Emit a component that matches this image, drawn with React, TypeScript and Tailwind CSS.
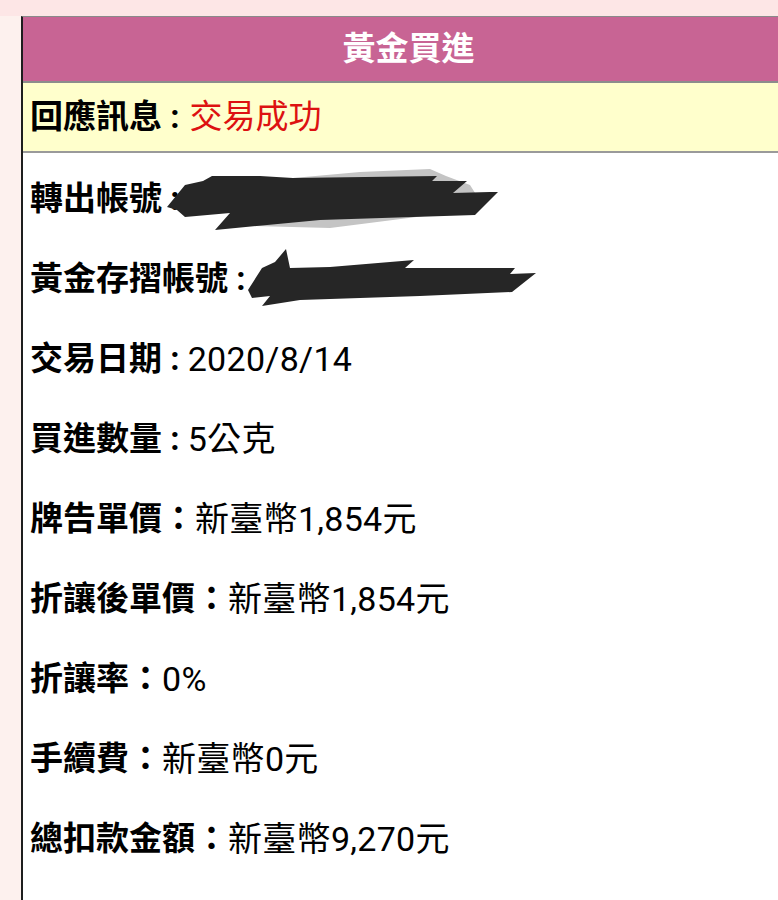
import React from 'react';

type Row = { label: string; sep: string; value?: string; redacted?: boolean };

const rows: Row[] = [
  { label: '轉出帳號', sep: ' :', redacted: true },
  { label: '黃金存摺帳號', sep: ' :', redacted: true },
  { label: '交易日期', sep: ' : ', value: '2020/8/14' },
  { label: '買進數量', sep: ' : ', value: '5公克' },
  { label: '牌告單價', sep: '：', value: '新臺幣1,854元' },
  { label: '折讓後單價', sep: '：', value: '新臺幣1,854元' },
  { label: '折讓率', sep: '：', value: '0%' },
  { label: '手續費', sep: '：', value: '新臺幣0元' },
  { label: '總扣款金額', sep: '：', value: '新臺幣9,270元' },
];

const Redactions: React.FC = () => (
  <svg
    className="absolute left-0 top-0 pointer-events-none"
    width="778"
    height="330"
    viewBox="0 0 778 330"
  >
    {/* grey smudge under the first scribble */}
    <path
      d="M293 178 L360 172 L430 169 L446 176 L470 185 L477 196 L470 201 L440 214 L330 228 L252 226 Z"
      fill="#c4c4c4"
    />
    <path
      d="M167 207 L185 185 L203 181 L212 176 L260 176 L293 178 L437 176 L432 181 L467 181 L453 193 L490 192 L498 192 L475 215 L320 220 L215 230 L230 213 L185 217 L177 210 Z"
      fill="#262626"
    />
    <path
      d="M248 290 L262 268 L275 262 L286 249 L290 268 L330 267 L414 260 L405 268 L515 268 L510 274 L536 273 L512 292 L420 296 L300 300 L262 306 L270 296 L252 298 Z"
      fill="#262626"
    />
  </svg>
);

const App: React.FC = () => {
  return (
    <div
      className="relative min-h-[900px] w-[778px] overflow-hidden bg-[#fdf1ee]"
      style={{ fontFamily: 'Roboto, "Noto Sans CJK TC", sans-serif' }}
    >
      <div className="h-[16px] bg-[#fde6e6]" />

      <div className="ml-[21px] w-[773px] min-h-[884px] border-l-2 border-t border-l-[#1e1e1e] border-t-[#8a8a8a] bg-white">
        <div className="flex h-[66px] items-center justify-center border-b-2 border-[#8c8c8c] bg-[#c86494]">
          <span className="text-[33px] font-bold text-white">黃金買進</span>
        </div>

        <div className="flex h-[70px] items-center border-b-2 border-[#9a9a9a] bg-[#ffffcc] pl-[7px]">
          <span className="text-[33px] font-bold text-black">回應訊息 :</span>
          <span className="ml-[10px] text-[33px] text-[#dd1111]">交易成功</span>
        </div>

        <div className="pt-[6px] pl-[7px]">
          {rows.map((r) => (
            <div key={r.label} className="flex h-[80px] items-center text-black">
              <span className="whitespace-pre text-[33px] font-bold">
                {r.label}
                {r.sep}
              </span>
              {r.value && (
                <span className="whitespace-pre text-[34px] tracking-[0.3px]">{r.value}</span>
              )}
            </div>
          ))}
        </div>
      </div>

      <Redactions />
    </div>
  );
};

export default App;
